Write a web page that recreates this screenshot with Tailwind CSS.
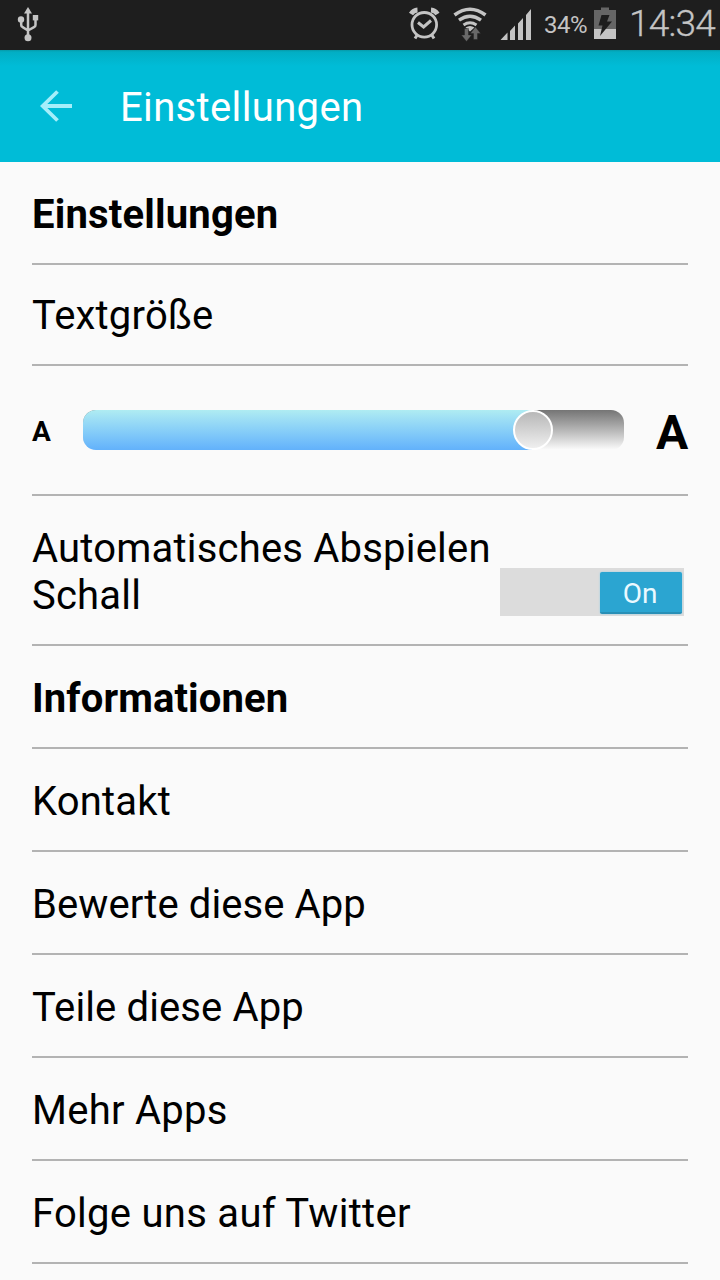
<!DOCTYPE html>
<html lang="de">
<head>
<meta charset="utf-8">
<title>Einstellungen</title>
<script src="https://cdn.jsdelivr.net/npm/@tailwindcss/browser@4"></script>
</head>
<body class="w-[720px] h-[1280px] overflow-hidden bg-[#fafafa] font-['Roboto',sans-serif] text-black text-[40px] leading-[47px]">
<div class="flex h-[50px] items-start bg-[#1e1e1e] text-[#c4c4c4]">
  <svg class="ml-4 block shrink-0" width="24" height="50" viewBox="16 0 24 50" fill="#c4c4c4">
    <path d="M28 7l4 6.500h-8z"/><circle cx="21" cy="19.500" r="3.200"/><path d="M32.800 15h5.400v5.400h-5.400z"/><circle cx="28" cy="37.800" r="3.500"/>
    <path d="M28 11v26M21.200 20v5q0 1.500 1.500 2.200L28 30.500M35.500 18v7q0 1.500-1.500 2.200L28 30.500" fill="none" stroke="#c4c4c4" stroke-width="2.500"/>
  </svg>
  <svg class="ml-[366px] block shrink-0" width="132" height="50" viewBox="406 0 132 50">
    <g fill="none" stroke="#c4c4c4">
      <circle cx="424.300" cy="24.800" r="12.300" stroke-width="2.800"/>
      <path d="M418 22.500l5.600 4.500 7.400-6.500" stroke-width="3"/>
      <path d="M411 14q2.500-3.800 6.500-4M431 10q4 .2 6.500 4" stroke-width="4.800"/>
      <path d="M417.500 34.500l-2.500 4M431.500 34.500l2.500 4" stroke-width="3"/>
      <path d="M454.500 15q15.500-11.500 31 0" stroke-width="3.600"/>
      <path d="M459 20.200q11-8 22 0" stroke-width="3.400"/>
      <path d="M463.500 24.900q6.500-4.400 13 0" stroke-width="3"/>
    </g>
    <path d="M465.500 27.500q4.500-3 9 0L470 31.500z" fill="#c4c4c4"/>
    <path d="M464.500 28.500h4v6.500h3.200L466.500 41.500l-5.200-6.500h3.200zM473.500 39.500h4V33.500h3.200L475.500 27l-5.200 6.500h3.200z" fill="#696969" stroke="#1e1e1e" stroke-width=".4"/>
    <path d="M500.500 40l7-7.500V40zM510 31l5-5.500V40h-5zM518 23.500l5-5.500V40h-5zM526 15l5-6V40h-5z" fill="#c4c4c4"/>
  </svg>
  <span class="ml-[6px] mt-[11px] w-[44px] whitespace-nowrap text-[24px] leading-[28px] tracking-[-0.5px]">34%</span>
  <svg class="ml-[4px] block shrink-0" width="26" height="50" viewBox="592 0 26 50">
    <path d="M594 10h7V7.500h8V10h7v19h-22z" fill="#666"/><path d="M594 29h22v10h-22z" fill="#c4c4c4"/>
    <path d="M601.500 15h8l-2.500 6.500h5L600 36l2.500-10.500h-4z" fill="#1e1e1e"/>
  </svg>
  <span class="ml-[11px] mt-[2px] whitespace-nowrap text-[37px] leading-[44px] font-light tracking-[-0.8px] [-webkit-text-stroke:0.3px_#c4c4c4]">14:34</span>
</div>
<header class="flex h-[112px] items-center bg-[linear-gradient(#0799a8_0px,#02aec4_2px,#00bcd7_16px)] text-white">
  <svg class="ml-10 block" width="32" height="32" viewBox="0 0 32 32" fill="none" stroke="#a5eefa" stroke-width="3.800"><path d="M32 16H3M17.500 1.500L2.700 16l14.800 14.500"/></svg>
  <h1 class="ml-12 mt-[2px] tracking-[0.35px]">Einstellungen</h1>
</header>
<main class="mx-8 flex flex-col">
  <h2 class="h-[103px] border-b-2 border-[#b3b3b3] pt-[29px] font-bold tracking-[0.17px]">Einstellungen</h2>
  <div class="h-[101px] border-b-2 border-[#b3b3b3] pt-[27px] tracking-[0.2px]">Textgröße</div>
  <div class="flex h-[130px] items-center border-b-2 border-[#b3b3b3]">
    <span class="mt-[2px] w-[51px] shrink-0 text-[28px] leading-[33px] font-bold">A</span>
    <div class="flex h-10 w-[541px] shrink-0 overflow-hidden rounded-[13px] bg-linear-to-b from-[#757575] to-[#fcfcfc]">
      <div class="h-10 w-[450px] bg-linear-to-b from-[#afecf2] to-[#62b1fb]"></div>
      <div class="-ml-5 size-10 rounded-full border-2 border-white bg-linear-to-b from-[#b8b8b8] to-[#efefef]"></div>
    </div>
    <span class="ml-8 mt-[5px] text-[48px] leading-[56px] font-bold">A</span>
  </div>
  <div class="flex h-[150px] border-b-2 border-[#b3b3b3] pt-[29px]">
    <div class="w-[468px] tracking-[0.2px]">Automatisches Abspielen Schall</div>
    <div class="mt-[43px] flex h-12 w-[184px] items-center justify-end bg-[#dcdcdc] pr-[2px]">
      <div class="mt-px h-[42px] w-[82px] rounded-[2px] border-b-2 border-[#288fb6] bg-[#2ba5d1] pr-[2px] text-center text-[28px] leading-[43px] text-[#eaf9ff] shadow-[0_0_2px_#8fcfe8]">On</div>
    </div>
  </div>
  <h2 class="h-[103px] border-b-2 border-[#b3b3b3] pt-[29px] font-bold tracking-[0.1px]">Informationen</h2>
  <div class="h-[103px] border-b-2 border-[#b3b3b3] pt-[29px] tracking-[0.18px]">Kontakt</div>
  <div class="h-[103px] border-b-2 border-[#b3b3b3] pt-[29px] tracking-[0.08px]">Bewerte diese App</div>
  <div class="h-[103px] border-b-2 border-[#b3b3b3] pt-[29px] tracking-[0.12px]">Teile diese App</div>
  <div class="h-[103px] border-b-2 border-[#b3b3b3] pt-[29px] tracking-[0.25px]">Mehr Apps</div>
  <div class="h-[103px] border-b-2 border-[#b3b3b3] pt-[29px] tracking-[0.28px]">Folge uns auf Twitter</div>
</main>
</body>
</html>
